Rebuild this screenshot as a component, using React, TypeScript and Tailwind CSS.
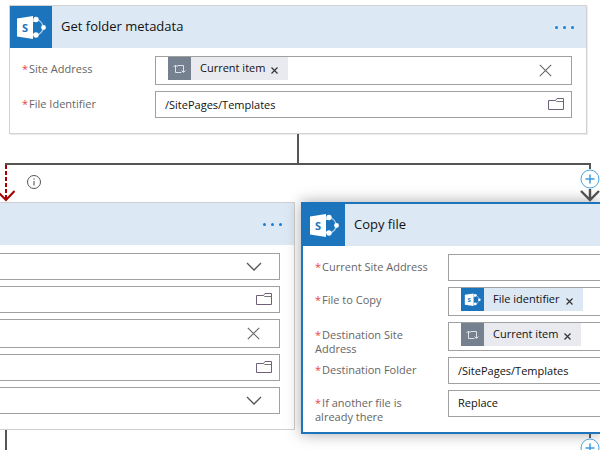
import type { ReactNode } from "react";
import clsx from "clsx";

const SharePointLogo = ({ className }: { className?: string }) => (
  <svg viewBox="0 0 42 42" className={className} aria-hidden="true">
    <rect width="42" height="42" fill="#1b74bc" />
    <path
      d="M26 13.500C30 14 32.500 17 33.500 21.500C32.500 26 30 28.500 26 29.500"
      fill="none"
      stroke="#a9cdea"
      strokeWidth="1.200"
    />
    <path d="M23 15.500l3-1.500M23 28l3 1.500" stroke="#fff" strokeWidth="1.200" />
    <path d="M7 12.500L23 10v23L7 30.500z" fill="#fff" />
    <circle cx="26" cy="13.500" r="2.700" fill="#fff" />
    <circle cx="26" cy="29" r="2.700" fill="#fff" />
    <circle cx="33.500" cy="21.500" r="2.400" fill="#fff" />
    <text
      x="15"
      y="25.500"
      textAnchor="middle"
      fontSize="11"
      fontWeight="700"
      fontFamily="Open Sans, sans-serif"
      fill="#1b74bc"
    >
      S
    </text>
  </svg>
);

const LoopIcon = () => (
  <svg viewBox="0 0 23 23" className="size-[23px]" aria-hidden="true">
    <rect width="23" height="23" fill="#76818f" />
    <g fill="none" stroke="#dfe2e6" strokeWidth="1">
      <path d="M7.500 8v7.500h6M9.500 8.500h6V15" />
      <path d="M5.500 10L7.500 8l2 2M13.500 13.500l2 2 2-2" />
    </g>
  </svg>
);

const FolderIcon = () => (
  <svg viewBox="0 0 16 12" className="h-3 w-4" fill="none" aria-hidden="true">
    <path d="M.5 11.500v-9h7l1.500-2h6.500v11z" stroke="#6f5f78" />
    <path d="M7.500 2.500l1 1h7" stroke="#777" />
  </svg>
);

const ClearIcon = () => (
  <svg viewBox="0 0 13 13" className="size-[13px]" fill="none" aria-hidden="true">
    <path d="M.8.8l11.400 11.400M12.200.8L.8 12.200" stroke="#666" strokeWidth="1.100" />
  </svg>
);

const ChevronIcon = () => (
  <svg viewBox="0 0 16 9" className="h-[9px] w-4" fill="none" aria-hidden="true">
    <path d="M1 1l7 7 7-7" stroke="#555" strokeWidth="1.300" />
  </svg>
);

const MoreButton = () => (
  <button type="button" aria-label="More commands" className="flex gap-[5px] py-2">
    <span className="size-[3px] rounded-full bg-[#1a7fd4]" />
    <span className="size-[3px] rounded-full bg-[#1a7fd4]" />
    <span className="size-[3px] rounded-full bg-[#1a7fd4]" />
  </button>
);

const AddButton = () => (
  <button type="button" aria-label="Insert step" className="shrink-0">
    <svg viewBox="0 0 20 20" className="size-5" fill="none" aria-hidden="true">
      <circle cx="10" cy="10" r="9" fill="#fff" stroke="#4ea3e0" />
      <path d="M10 5.500v9M5.500 10h9" stroke="#3d9ae0" strokeWidth="1.500" />
    </svg>
  </button>
);

const Token = ({ label, icon, blue }: { label: string; icon: ReactNode; blue?: boolean }) => (
  <span
    className={clsx(
      "flex h-[23px] shrink-0 items-center whitespace-nowrap",
      blue ? "bg-[#dce8f4]" : "bg-[#e9eaef]"
    )}
  >
    {icon}
    <span className="pl-[9px]">{label}</span>
    <button type="button" aria-label={`Remove ${label}`} className="pt-1 pr-2.5 pl-1.5">
      <svg viewBox="0 0 7 7" className="size-[7px]" fill="none" aria-hidden="true">
        <path d="M.5.5l6 6M6.500.5l-6 6" stroke="#333" strokeWidth="1.200" />
      </svg>
    </button>
  </span>
);

type FieldProps = {
  id: string;
  label: string;
  value?: string;
  token?: ReactNode;
  kind?: "text" | "folder" | "clear" | "select";
  tall?: boolean;
  clipLeft?: boolean;
  clipRight?: boolean;
};

const Field = ({
  id,
  label,
  value = "",
  token,
  kind = "text",
  tall,
  clipLeft,
  clipRight,
}: FieldProps) => (
  <div className="flex items-start">
    {!clipLeft && (
      <label htmlFor={id} className="w-[133px] shrink-0 pt-1.5 pr-4 leading-3.5 text-[#666]">
        <span className="mr-px text-[#e8444f]">*</span>
        {label}
      </label>
    )}
    <div className="min-w-0 flex-1 pb-1.5">
      <div
        className={clsx(
          "flex items-center border-y border-[#a0a0a0] bg-white",
          tall ? "h-[29px]" : "h-[27px]",
          !clipLeft && "border-l",
          !clipRight && "border-r"
        )}
      >
        {token && <div className="self-start pl-3">{token}</div>}
        {kind === "select" ? (
          <div className="relative h-full flex-1">
            <select
              id={id}
              aria-label={label}
              defaultValue={value}
              className="size-full appearance-none pl-[9px] outline-none"
            >
              <option>{value}</option>
            </select>
            {!clipRight && (
              <span className="pointer-events-none absolute inset-y-0 right-0 flex items-center pr-[17px]">
                <ChevronIcon />
              </span>
            )}
          </div>
        ) : (
          <input
            id={id}
            aria-label={label}
            defaultValue={value}
            className="h-full min-w-0 flex-1 pl-[9px] outline-none"
          />
        )}
        {kind === "folder" && (
          <button type="button" aria-label="Show picker" className="pr-[7px] pb-0.5">
            <FolderIcon />
          </button>
        )}
        {kind === "clear" && (
          <button type="button" aria-label="Clear value" className="pr-[19px]">
            <ClearIcon />
          </button>
        )}
      </div>
    </div>
  </div>
);

const loopToken = <Token label="Current item" icon={<LoopIcon />} />;

export default function App() {
  return (
    <main className="h-screen overflow-hidden bg-white pt-[5px] font-['Open_Sans','Noto_Sans',sans-serif] text-[11px] text-[#111]">
      {/* Parent action */}
      <section className="mr-[13px] ml-[9px] border border-[#d2d2d2] shadow-[1px_1px_0_#ececec]">
        <header className="flex h-[42px] items-center bg-[#dce8f4] pr-3">
          <SharePointLogo className="size-[42px]" />
          <h2 className="flex-1 pl-[9px] text-[13px]">Get folder metadata</h2>
          <MoreButton />
        </header>
        <div className="pt-2 pr-3.5 pb-[9px] pl-3">
          <Field id="site" label="Site Address" token={loopToken} kind="clear" tall />
          <Field id="file" label="File Identifier" value="/SitePages/Templates" kind="folder" />
        </div>
      </section>

      {/* Fork */}
      <div className="flex justify-center pr-1">
        <span className="h-[29px] w-0.5 bg-[#555]" />
      </div>
      <div className="mr-[9px] ml-[5px] h-0.5 bg-[#555]" />

      <div className="grid grid-cols-[295fr_299fr] gap-1.5">
        {/* Left branch, runs after a failure */}
        <div className="min-w-0">
          <div className="flex h-[37px] items-start">
            <svg viewBox="0 0 15 37" className="h-[37px] w-[15px]" fill="none" aria-hidden="true">
              <path d="M6 0v35" stroke="#a80000" strokeWidth="2" strokeDasharray="4 2" />
              <path d="M-3 26l9 9 8.500-9" stroke="#a80000" strokeWidth="2" />
            </svg>
            <button type="button" aria-label="Run after details" className="pt-2.5 pl-3">
              <svg viewBox="0 0 15 15" className="size-[15px]" fill="none" aria-hidden="true">
                <circle cx="7" cy="7" r="6.500" stroke="#555" />
                <path d="M7 6v4.500M7 3.500v1.300" stroke="#666" strokeWidth="1.200" />
              </svg>
            </button>
          </div>
          <section className="border-y border-r border-[#cfcfcf]">
            <header className="flex h-[42px] items-center justify-end bg-[#dce8f4] pr-3">
              <MoreButton />
            </header>
            <div className="pt-2 pr-3.5 pb-[9px]">
              <Field id="l1" label="Current Site Address" kind="select" clipLeft />
              <Field id="l2" label="File to Copy" kind="folder" clipLeft />
              <Field id="l3" label="Destination Site Address" kind="clear" tall clipLeft />
              <Field id="l4" label="Destination Folder" kind="folder" clipLeft />
              <Field id="l5" label="If another file is already there" kind="select" clipLeft />
            </div>
          </section>
          <div className="ml-[5px] h-8 w-0.5 bg-[#555]" />
        </div>

        {/* Right branch, selected */}
        <div className="min-w-0">
          <div className="ml-auto flex h-[37px] w-5 flex-col items-center">
            <span className="h-1 w-0.5 shrink-0 bg-[#555]" />
            <AddButton />
            <svg viewBox="0 0 20 13" className="h-[13px] w-5" fill="none" aria-hidden="true">
              <path d="M10 0v11M1 2l9 9 9-9" stroke="#505050" strokeWidth="2.400" />
            </svg>
          </div>
          <section className="border-y-2 border-l-2 border-[#1b74bc] bg-white shadow-[0_0_14px_rgba(0,0,0,0.35)]">
            <header className="flex h-[42px] items-center bg-[#dce8f4]">
              <SharePointLogo className="size-[42px]" />
              <h2 className="flex-1 pl-[9px] text-[13px]">Copy file</h2>
            </header>
            <div className="pt-2 pb-2 pl-3">
              <Field id="r1" label="Current Site Address" clipRight />
              <Field
                id="r2"
                label="File to Copy"
                token={
                  <Token
                    label="File identifier"
                    icon={<SharePointLogo className="size-[23px]" />}
                    blue
                  />
                }
                tall
                clipRight
              />
              <Field id="r3" label="Destination Site Address" token={loopToken} tall clipRight />
              <Field id="r4" label="Destination Folder" value="/SitePages/Templates" clipRight />
              <Field
                id="r5"
                label="If another file is already there"
                value="Replace"
                kind="select"
                clipRight
              />
            </div>
          </section>
          <div className="ml-auto flex w-5 flex-col items-center">
            <span className="h-1 w-0.5 bg-[#555]" />
            <AddButton />
          </div>
        </div>
      </div>
    </main>
  );
}
